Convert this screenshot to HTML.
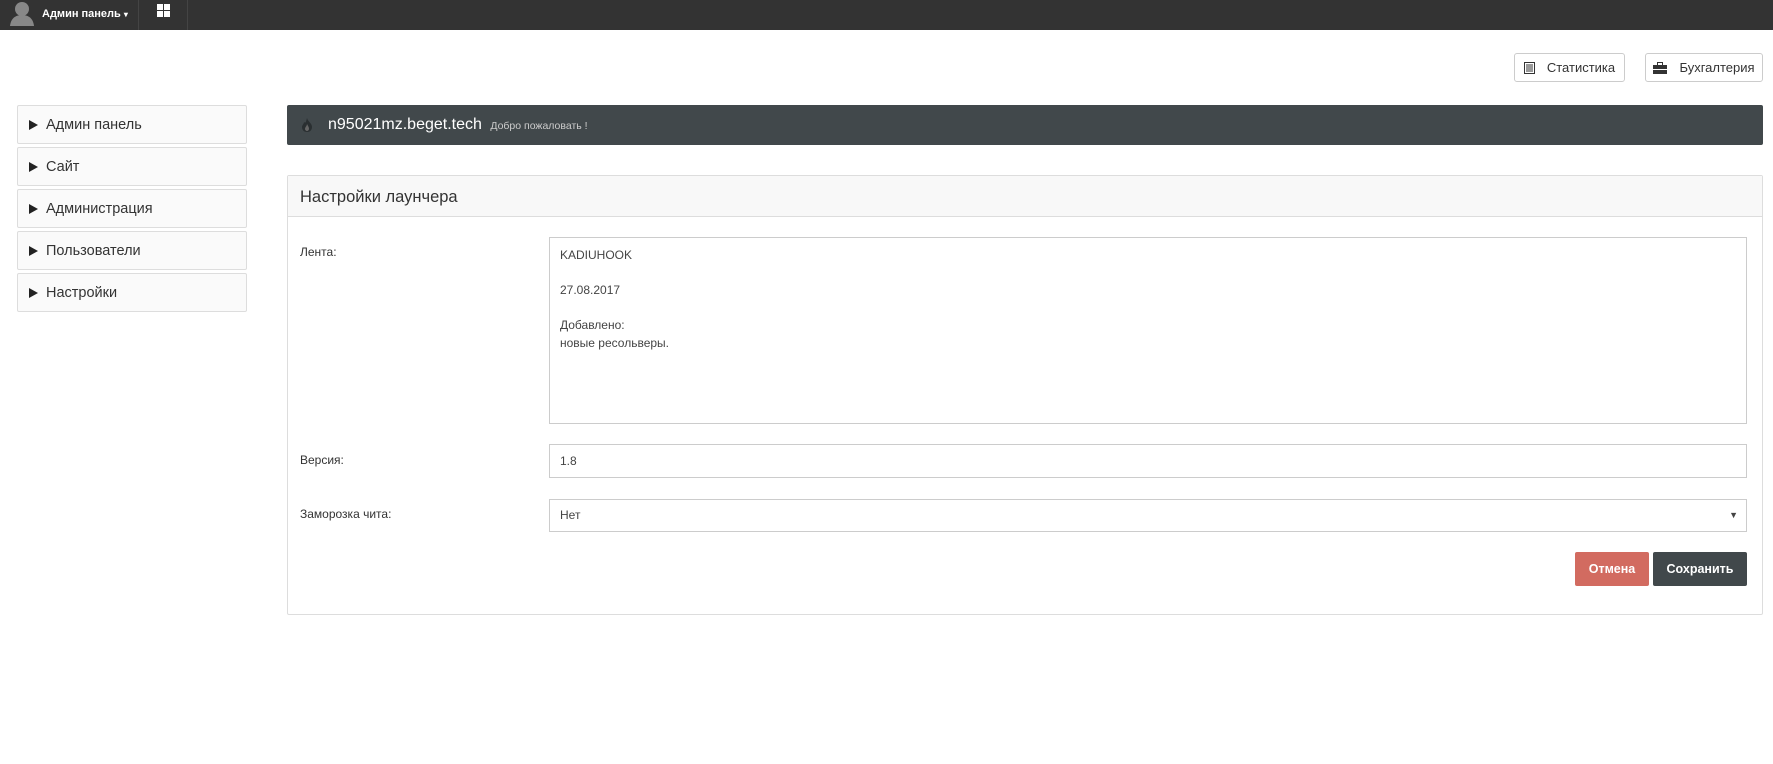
<!DOCTYPE html>
<html><head><meta charset="utf-8"><style>
*{box-sizing:border-box;margin:0;padding:0}
body{width:1773px;height:764px;background:#fff;font-family:"Liberation Sans",sans-serif;color:#333;position:relative;overflow:hidden}
.top{position:absolute;left:0;top:0;width:1773px;height:30px;background:#333}
.top .sep{position:absolute;top:0;width:1px;height:30px;background:#444}
.abs{position:absolute}
.btn{position:absolute;border:1px solid #ccc;border-radius:3px;background:#fff;font-size:13px;color:#333;display:flex;align-items:center;justify-content:center}
.side{position:absolute;left:17px;width:230px;height:39px;border:1px solid #ddd;border-radius:2px;background:#fafafa;font-size:14.5px;display:flex;align-items:center;padding-left:11px}
.side span.tri{display:inline-block;width:0;height:0;border-left:9px solid #222;border-top:5.5px solid transparent;border-bottom:5.5px solid transparent;margin-right:8px}
.lbl{position:absolute;left:300px;font-size:12px;color:#333}
.inp{position:absolute;left:549px;width:1198px;border:1px solid #ccc;background:#fff;font-size:12px;color:#444;padding-left:10px}
</style></head><body>
<div class="top">
  <svg class="abs" style="left:9px;top:0" width="26" height="26" viewBox="0 0 26 26"><circle cx="13" cy="9" r="7" fill="#888"/><path d="M1 26 C2 17 8 15 13 15 C18 15 24 17 25 26Z" fill="#888"/></svg>
  <div class="abs" style="left:42px;top:8px;color:#fff;font-size:11px;font-weight:bold">Админ панель <span style="font-size:8px">▾</span></div>
  <div class="sep" style="left:138px"></div>
  <svg class="abs" style="left:157px;top:4px" width="13" height="13" viewBox="0 0 13 13" fill="#fff"><rect x="0" y="0" width="6" height="6"/><rect x="7" y="0" width="6" height="6"/><rect x="0" y="7" width="6" height="6"/><rect x="7" y="7" width="6" height="6"/></svg>
  <div class="sep" style="left:187px"></div>
</div>

<div class="btn" style="left:1514px;top:53px;width:111px;height:29px"><svg width="11" height="12" viewBox="0 0 11 12" style="margin-right:12px"><rect x="0.5" y="0.5" width="10" height="11" fill="none" stroke="#333"/><path d="M2 3h7M2 5h7M2 7h7M2 9h7" stroke="#333"/></svg>Статистика</div>
<div class="btn" style="left:1645px;top:53px;width:118px;height:29px"><svg width="14" height="12" viewBox="0 0 14 12" style="margin-right:12px"><rect x="0" y="3" width="14" height="9" fill="#333"/><rect x="4.5" y="0.5" width="5" height="3" fill="none" stroke="#333"/><rect x="0" y="7" width="14" height="1" fill="#fff"/></svg>Бухгалтерия</div>

<div class="side" style="top:105px"><span class="tri"></span>Админ панель</div>
<div class="side" style="top:147px"><span class="tri"></span>Сайт</div>
<div class="side" style="top:189px"><span class="tri"></span>Администрация</div>
<div class="side" style="top:231px"><span class="tri"></span>Пользователи</div>
<div class="side" style="top:273px"><span class="tri"></span>Настройки</div>

<div class="abs" style="left:287px;top:105px;width:1476px;height:40px;background:#41484b;border-radius:2px">
  <svg class="abs" style="left:14px;top:13px" width="12" height="14" viewBox="0 0 12 14"><path d="M6 0C7 4 11 5 11 9C11 12 9 14 6 14C3 14 1 12 1 9C1 7 3 6 3 4C5 6 5 3 6 0Z" fill="#2a2f31"/><path d="M6 6C7 8 8 9 8 11C8 12 7 13 6 13C5 13 4 12 4 11C4 9 6 8 6 6Z" fill="#666"/></svg>
  <div class="abs" style="left:41px;top:11px;color:#fff;font-size:16px">n95021mz.beget.tech <span style="font-size:10.5px;color:#ccc;margin-left:4px">Добро пожаловать !</span></div>
</div>

<div class="abs" style="left:287px;top:175px;width:1476px;height:440px;border:1px solid #ddd;border-radius:2px">
  <div style="height:41px;background:#f8f8f8;border-bottom:1px solid #ddd;font-size:16.5px;padding:12px 0 0 12px;color:#333">Настройки лаунчера</div>
</div>

<div class="lbl" style="top:245px">Лента:</div>
<div class="inp" style="top:237px;height:187px;padding-top:9px;line-height:17.5px">KADIUHOOK<br><br>27.08.2017<br><br>Добавлено:<br>новые ресольверы.</div>
<div class="lbl" style="top:453px">Версия:</div>
<div class="inp" style="top:444px;height:34px;line-height:32px">1.8</div>
<div class="lbl" style="top:507px">Заморозка чита:</div>
<div class="inp" style="top:499px;height:33px;line-height:31px">Нет<span style="position:absolute;right:8px;font-size:9px;color:#444">▼</span></div>

<div class="abs" style="left:1575px;top:552px;width:74px;height:34px;background:#d26b60;border-radius:2px;color:#fff;font-weight:bold;font-size:12.5px;text-align:center;line-height:34px">Отмена</div>
<div class="abs" style="left:1653px;top:552px;width:94px;height:34px;background:#41484b;border-radius:2px;color:#fff;font-weight:bold;font-size:12.5px;text-align:center;line-height:34px">Сохранить</div>
</body></html>
